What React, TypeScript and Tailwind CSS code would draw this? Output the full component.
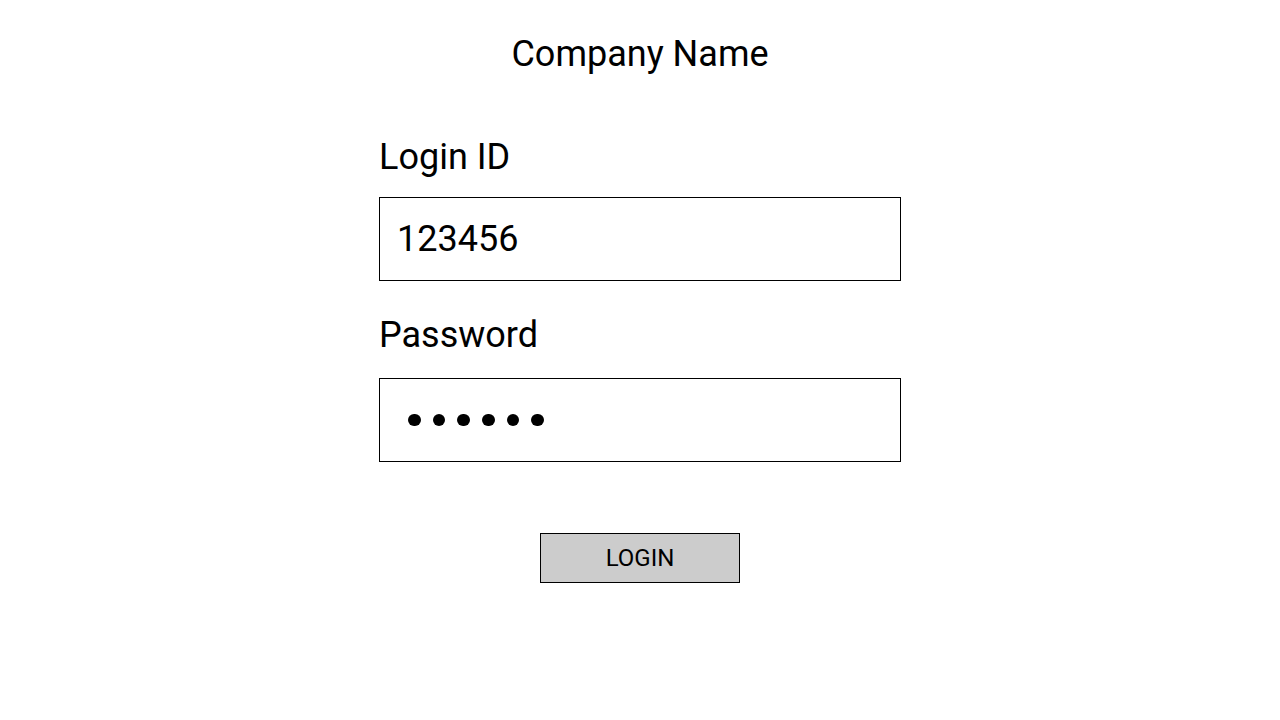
export default function App() {
  return (
    <div className="flex h-[720px] w-full flex-col items-center bg-white font-['Roboto',sans-serif] text-black">
      <h1 className="mt-[34px] text-[36px] leading-[40px]">Company Name</h1>

      <form className="mt-[63px] flex w-[522px] flex-col" onSubmit={(e) => e.preventDefault()}>
        <label className="text-[36px] leading-[40px]">Login ID</label>
        <div className="mt-[20px] flex h-[84px] items-center border border-black px-[17px] text-[36px]">
          123456
        </div>

        <label className="mt-[34px] text-[36px] leading-[40px]">Password</label>
        <div className="mt-[23px] flex h-[84px] items-center gap-[12.2px] border border-black pl-[28px]">
          {[0, 1, 2, 3, 4, 5].map((i) => (
            <span key={i} className="h-[12.5px] w-[12.5px] rounded-full bg-black" />
          ))}
        </div>

        <div className="mt-[71px] flex justify-center">
          <button
            type="submit"
            className="h-[50px] w-[200px] border border-black bg-[#cccccc] text-[24px]"
          >
            LOGIN
          </button>
        </div>
      </form>
    </div>
  );
}
